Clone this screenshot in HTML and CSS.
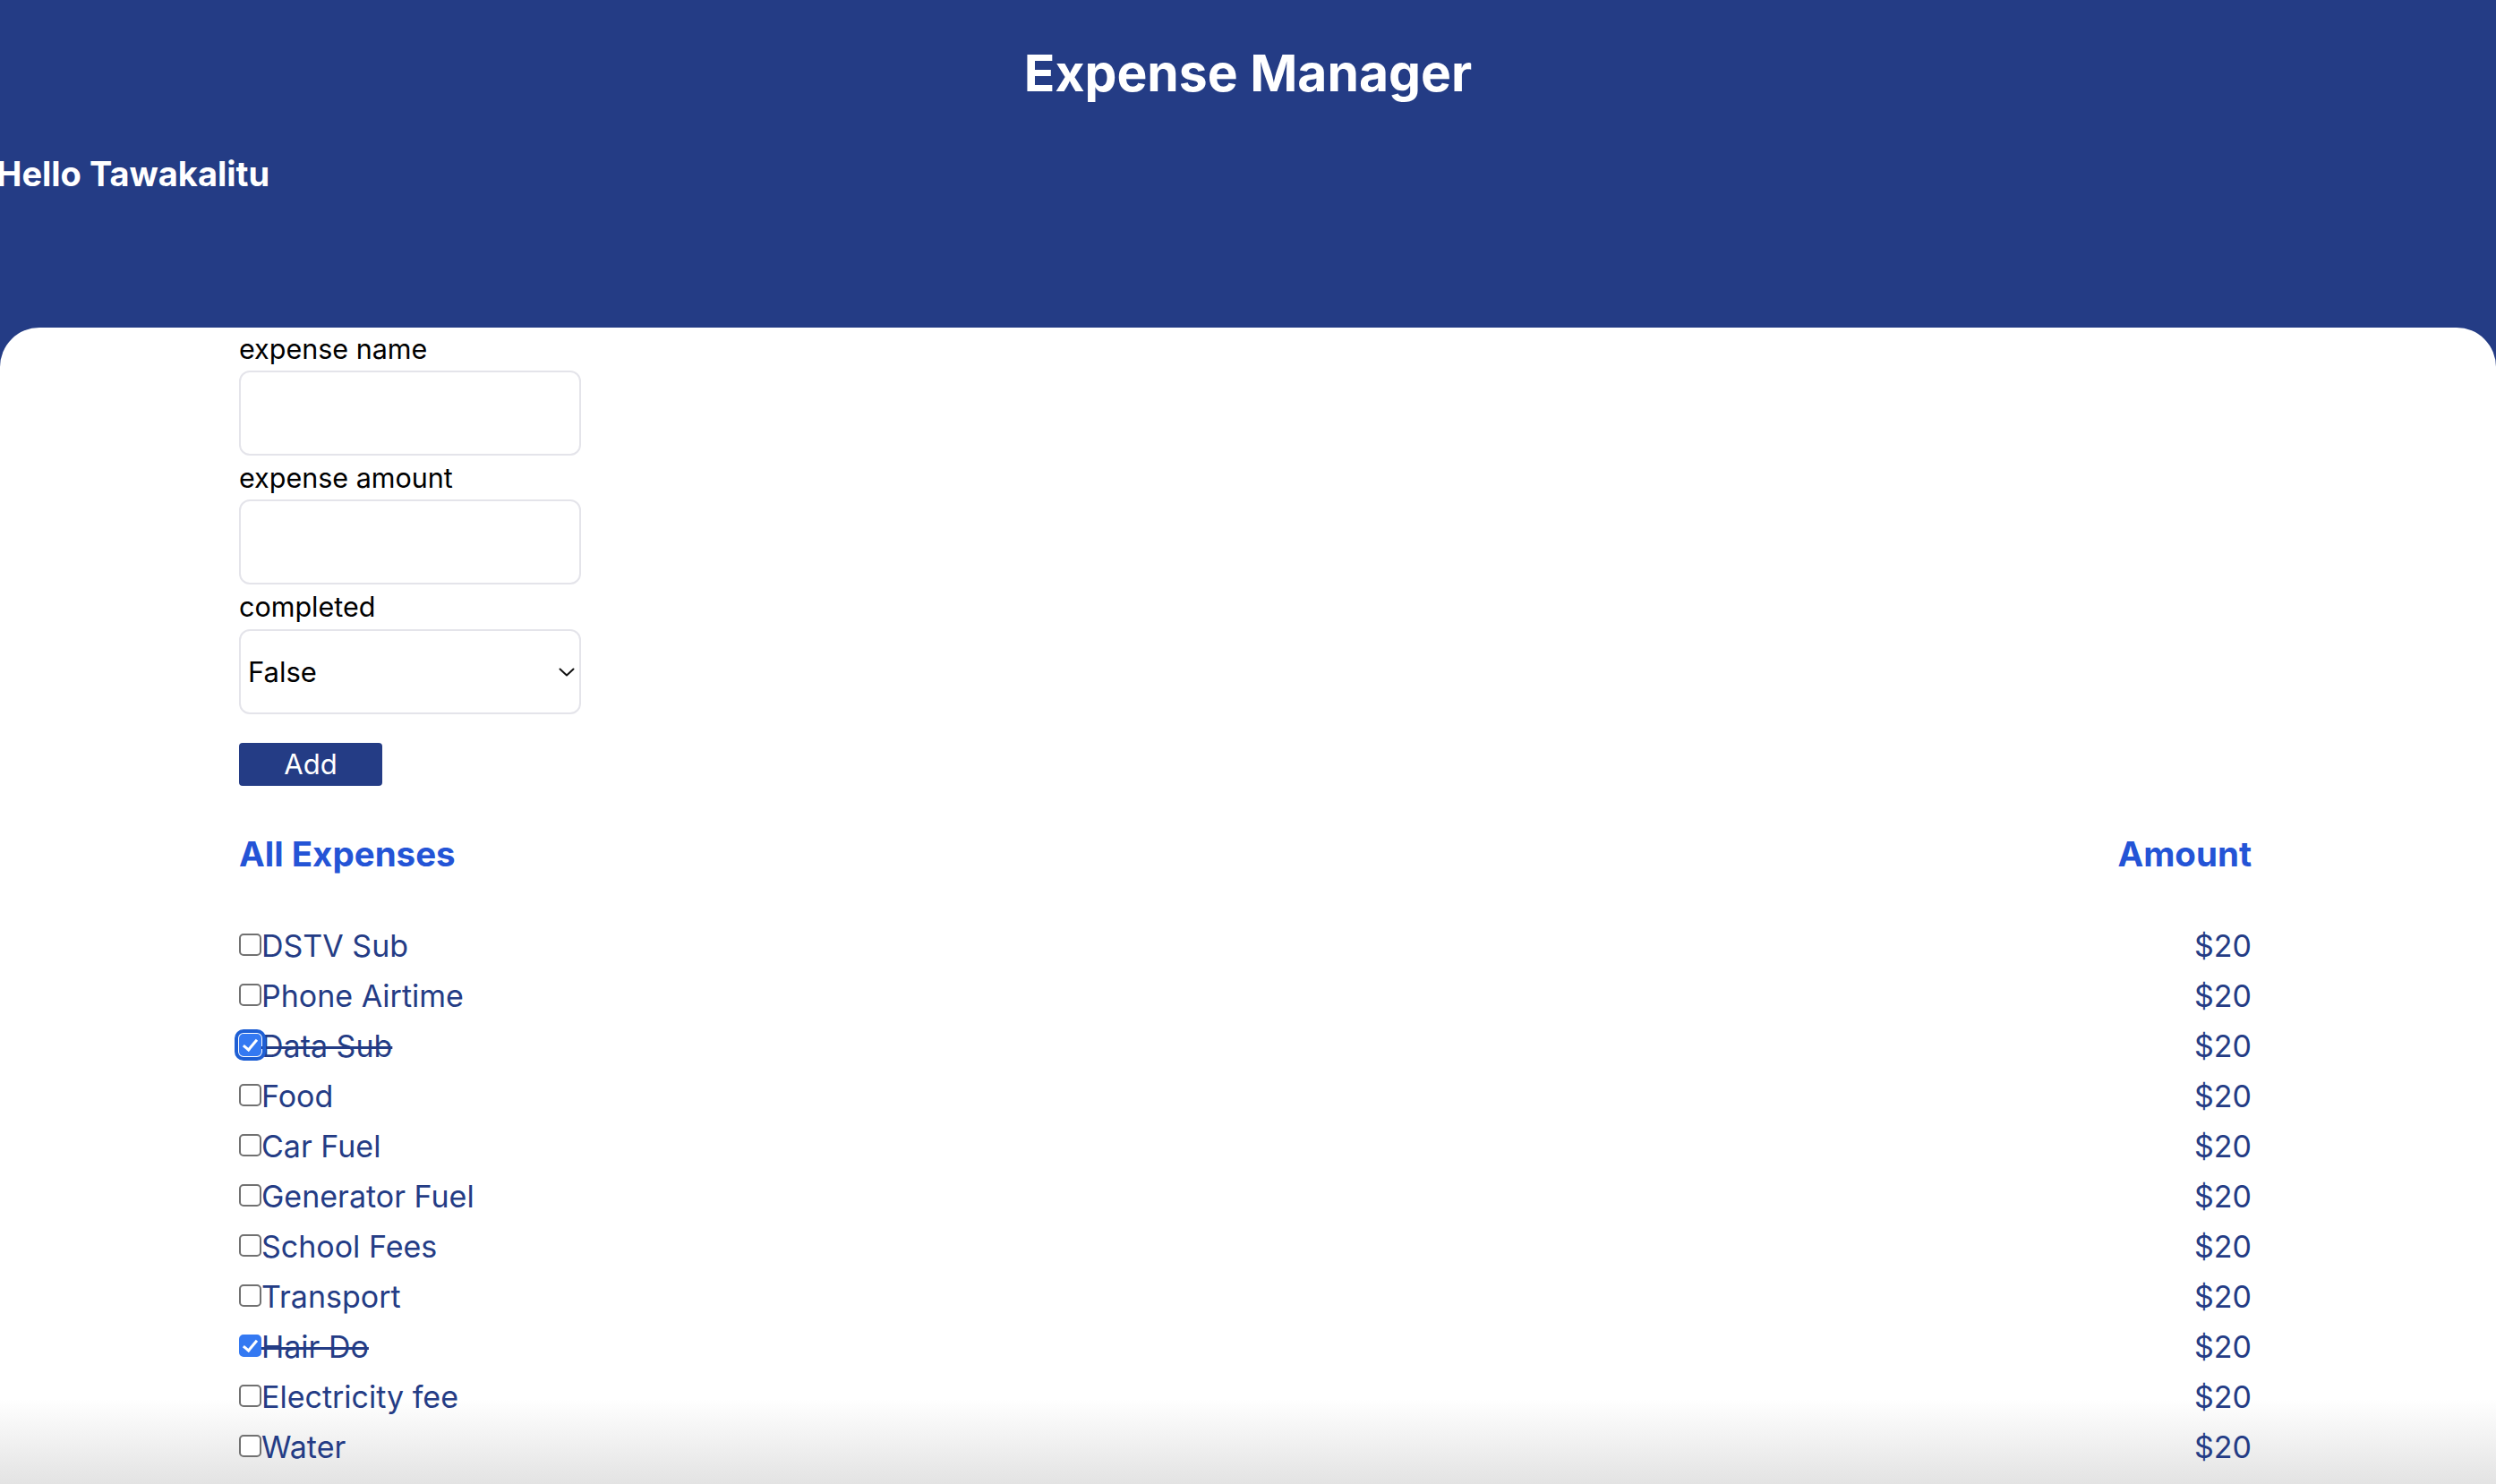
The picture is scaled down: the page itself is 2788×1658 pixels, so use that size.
FILE: index.html
```html
<!DOCTYPE html>
<html lang="en">
<head>
<meta charset="utf-8">
<title>Expense Manager</title>
<link rel="stylesheet" href="styles.css">
</head>
<body>
<header class="header">
  <h1 class="title">Expense Manager</h1>
  <h2 class="greeting">Hello Tawakalitu</h2>
</header>
<main class="panel">
  <form class="form">
    <label class="field-label" for="name">expense name</label>
    <input class="field" id="name" type="text">
    <label class="field-label" for="amount">expense amount</label>
    <input class="field" id="amount" type="text">
    <label class="field-label" for="completed">completed</label>
    <div class="select-wrap">
      <select class="field select" id="completed">
        <option>False</option>
        <option>True</option>
      </select>
      <svg class="chevron" width="18" height="10" viewBox="0 0 18 10"><path d="M1.5 1.5 L9 8.5 L16.5 1.5" fill="none" stroke="#111" stroke-width="2" stroke-linecap="round" stroke-linejoin="round"/></svg>
    </div>
    <button class="add-btn" type="button">Add</button>
  </form>

  <section class="list">
    <div class="list-head">
      <h3 class="list-title">All Expenses</h3>
      <h3 class="list-title">Amount</h3>
    </div>
    <ul class="rows">
      <li class="row"><label class="item"><input class="check" type="checkbox"><span>DSTV Sub</span></label><span class="amount">$20</span></li>
      <li class="row"><label class="item"><input class="check" type="checkbox"><span>Phone Airtime</span></label><span class="amount">$20</span></li>
      <li class="row"><label class="item"><input class="check focused" type="checkbox" checked><span class="done">Data Sub</span></label><span class="amount">$20</span></li>
      <li class="row"><label class="item"><input class="check" type="checkbox"><span>Food</span></label><span class="amount">$20</span></li>
      <li class="row"><label class="item"><input class="check" type="checkbox"><span>Car Fuel</span></label><span class="amount">$20</span></li>
      <li class="row"><label class="item"><input class="check" type="checkbox"><span>Generator Fuel</span></label><span class="amount">$20</span></li>
      <li class="row"><label class="item"><input class="check" type="checkbox"><span>School Fees</span></label><span class="amount">$20</span></li>
      <li class="row"><label class="item"><input class="check" type="checkbox"><span>Transport</span></label><span class="amount">$20</span></li>
      <li class="row"><label class="item"><input class="check" type="checkbox" checked><span class="done">Hair Do</span></label><span class="amount">$20</span></li>
      <li class="row"><label class="item"><input class="check" type="checkbox"><span>Electricity fee</span></label><span class="amount">$20</span></li>
      <li class="row"><label class="item"><input class="check" type="checkbox"><span>Water</span></label><span class="amount">$20</span></li>
    </ul>
  </section>
</main>
</body>
</html>
```
FILE: styles.css
```css
html, body {
  margin: 0;
  padding: 0;
}

body {
  background: #243c85;
  font-family: Inter, "Noto Sans", "Liberation Sans", sans-serif;
  overflow: hidden;
}

.header {
  height: 366px;
  box-sizing: border-box;
  padding-top: 47px;
  color: #ffffff;
}

.title {
  margin: 0;
  text-align: center;
  font-size: 57px;
  line-height: 70px;
  font-weight: 700;
}

.greeting {
  margin: 55px 0 0 -4px;
  font-size: 38px;
  line-height: 45px;
  font-weight: 700;
}

.panel {
  display: block;
  height: 1292px;
  box-sizing: border-box;
  padding: 5px 273px 0 267px;
  background: linear-gradient(to bottom, #ffffff 0, #ffffff calc(100% - 95px), #e3e3e3 100%);
  border-radius: 44px 44px 0 0;
}

.form {
  display: flex;
  flex-direction: column;
  align-items: flex-start;
}

.field-label {
  font-size: 30.5px;
  line-height: 38px;
  color: #000000;
}

.field {
  display: block;
  width: 382px;
  height: 95px;
  margin-top: 5px;
  margin-bottom: 6px;
  box-sizing: border-box;
  border: 2px solid #e4e4ea;
  border-radius: 12px;
  background: #ffffff;
  font-family: inherit;
  font-size: 31px;
  color: #000000;
  outline: none;
}

.select-wrap {
  position: relative;
  width: 382px;
  margin-top: 6px;
}

.select {
  appearance: none;
  -webkit-appearance: none;
  margin: 0;
  padding: 0 40px 0 8px;
}

.chevron {
  position: absolute;
  right: 7px;
  top: 50%;
  transform: translateY(-50%);
  pointer-events: none;
}

.add-btn {
  margin-top: 32px;
  width: 160px;
  height: 48px;
  border: none;
  border-radius: 4px;
  background: #243c85;
  color: #ffffff;
  font-family: inherit;
  font-size: 31px;
  line-height: 48px;
  padding: 0;
}

.list {
  margin-top: 53px;
}

.list-head {
  display: flex;
  justify-content: space-between;
  align-items: baseline;
}

.list-title {
  margin: 0;
  font-size: 38.5px;
  line-height: 47px;
  font-weight: 700;
  color: #2454d6;
}

.rows {
  list-style: none;
  margin: 51px 0 0;
  padding: 0;
}

.row {
  display: flex;
  justify-content: space-between;
  align-items: center;
  height: 56px;
  font-size: 34px;
  line-height: 56px;
  color: #243c85;
}

.item {
  display: flex;
  align-items: center;
}

.check {
  appearance: none;
  -webkit-appearance: none;
  position: relative;
  flex: none;
  width: 25px;
  height: 25px;
  margin: 0 0 3px 0;
  box-sizing: border-box;
  border: 2px solid #717171;
  border-radius: 5px;
  background: #ffffff;
}

.check:checked {
  background: #3479f2;
  border-color: #3479f2;
}

.check:checked::after {
  content: "";
  position: absolute;
  left: 6px;
  top: 1px;
  width: 6px;
  height: 13px;
  border: solid #ffffff;
  border-width: 0 3px 3px 0;
  transform: rotate(40deg);
}

.check.focused {
  outline: 4px solid #1e5fd4;
  outline-offset: 1px;
}

.done {
  text-decoration: line-through;
  text-decoration-thickness: 3px;
}

.amount {
  text-align: right;
}
```
